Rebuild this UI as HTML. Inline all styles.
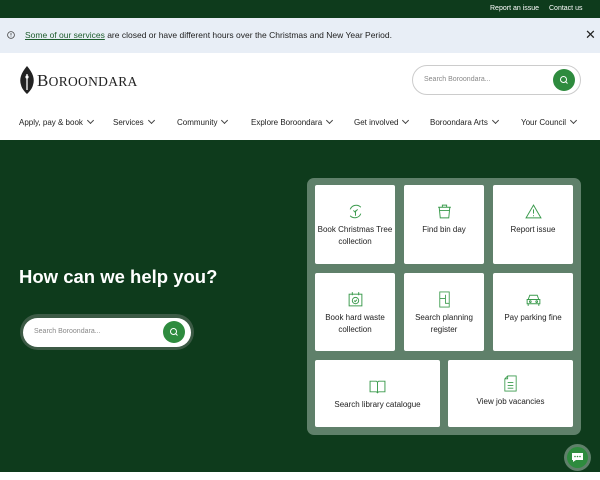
<!DOCTYPE html>
<html><head><style>
*{margin:0;padding:0;box-sizing:border-box}
body{width:600px;height:480px;overflow:hidden;font-family:"Liberation Sans",sans-serif;background:#fff;position:relative}
.a{position:absolute}
.top{left:0;top:0;width:600px;height:18px;background:#0e3b1c;color:#fff;font-size:7px}
.ban{left:0;top:18px;width:600px;height:35px;background:#e8eef6;font-size:8.5px;color:#222}
.nav{top:118px;font-size:8px;color:#222;white-space:nowrap}
.nav span.c{display:inline-block;width:5px;height:5px;border-right:1px solid #444;border-bottom:1px solid #444;transform:rotate(45deg);margin-left:5px;position:relative;top:-2px}
.hero{left:0;top:140px;width:600px;height:332px;background:#0e3b1c}
.panel{left:307px;top:178px;width:274px;height:257px;background:#5f806a;border-radius:7px}
.t{background:#fff;border-radius:2px;display:flex;flex-direction:column;align-items:center;justify-content:flex-start;text-align:center;font-size:8px;color:#222;line-height:11.5px;padding-top:18px}
.t svg{margin-bottom:4px;width:17px;height:17px}
.srch{border-radius:20px;background:#fff;font-size:7px;color:#888}
.btn{border-radius:50%;background:#2e8b3e}
</style></head><body>
<div class="a top"><span class="a" style="left:490px;top:5px">Report an issue</span><span class="a" style="left:549px;top:5px">Contact us</span></div>
<div class="a ban">
<svg class="a" style="left:7px;top:13px" width="8" height="8" viewBox="0 0 8 8"><circle cx="4" cy="4" r="3.4" fill="none" stroke="#444" stroke-width=".8"/><path d="M4 2v2.5M4 5.5v.6" stroke="#444" stroke-width=".8"/></svg>
<span class="a" style="left:25px;top:12px"><u style="color:#1d5c2c">Some of our services</u> are closed or have different hours over the Christmas and New Year Period.</span>
<span class="a" style="left:585px;top:9px;font-size:13px">✕</span></div>
<svg class="a" style="left:18px;top:65px" width="18" height="30" viewBox="0 0 18 30"><path d="M9 1C3 8 1 14 3 20c1 4 4 7 6 9 2-2 5-5 6-9 2-6 0-12-6-19z" fill="#222"/><path d="M9 9v16" stroke="#fff" stroke-width="1.3"/><circle cx="9" cy="12" r="1.6" fill="#fff"/></svg>
<span class="a" style="left:37px;top:71px;font-family:'Liberation Serif',serif;font-size:17px;color:#222;letter-spacing:.3px">B<span style="font-size:13.5px">OROONDARA</span></span>
<div class="a srch" style="left:412px;top:65px;width:169px;height:30px;border:1px solid #ccc"><span class="a" style="left:11px;top:10px">Search Boroondara...</span><div class="a btn" style="left:140px;top:3px;width:22px;height:22px"><svg class="a" style="left:6px;top:6px" width="10" height="10" viewBox="0 0 10 10"><circle cx="4.5" cy="4.5" r="3" fill="none" stroke="#fff"/><path d="M6.7 6.7L8.5 8.5" stroke="#fff"/></svg></div></div>
<div class="a nav" style="left:19px">Apply, pay &amp; book<span class="c"></span></div>
<div class="a nav" style="left:113px">Services<span class="c"></span></div>
<div class="a nav" style="left:177px">Community<span class="c"></span></div>
<div class="a nav" style="left:251px">Explore Boroondara<span class="c"></span></div>
<div class="a nav" style="left:354px">Get involved<span class="c"></span></div>
<div class="a nav" style="left:430px">Boroondara Arts<span class="c"></span></div>
<div class="a nav" style="left:521px">Your Council<span class="c"></span></div>
<div class="a hero"></div>
<div class="a" style="left:19px;top:266px;font-size:18.5px;font-weight:bold;color:#fff">How can we help you?</div>
<div class="a" style="left:20px;top:314px;width:174px;height:36px;border-radius:20px;background:#3c5a45"></div>
<div class="a srch" style="left:23px;top:318px;width:168px;height:29px"><span class="a" style="left:11px;top:10px">Search Boroondara...</span><div class="a btn" style="left:140px;top:3px;width:22px;height:22px"><svg class="a" style="left:6px;top:6px" width="10" height="10" viewBox="0 0 10 10"><circle cx="4.5" cy="4.5" r="3" fill="none" stroke="#fff"/><path d="M6.7 6.7L8.5 8.5" stroke="#fff"/></svg></div></div>
<div class="a panel"></div>
<div class="a t" style="left:315px;top:185px;width:80px;height:79px"><svg viewBox="0 0 16 16" fill="none" stroke="#3a9a4c" stroke-width=".9"><path d="M3 6a6 6 0 0 1 10-2M13 10a6 6 0 0 1-10 2"/><path d="M8 12V7M8 9l-2-2M8 8l2-2"/></svg>Book Christmas Tree collection</div>
<div class="a t" style="left:404px;top:185px;width:80px;height:79px"><svg viewBox="0 0 16 16" fill="none" stroke="#3a9a4c" stroke-width=".9"><path d="M2 4h12M6 4V2h4v2M3 4l1 10h8l1-10M3 7h10"/></svg>Find bin day</div>
<div class="a t" style="left:493px;top:185px;width:80px;height:79px"><svg viewBox="0 0 16 16" fill="none" stroke="#3a9a4c" stroke-width=".9"><path d="M8 2L1 14h14z M8 6v4M8 11.5v1"/></svg>Report issue</div>
<div class="a t" style="left:315px;top:273px;width:80px;height:78px"><svg viewBox="0 0 16 16" fill="none" stroke="#3a9a4c" stroke-width=".9"><rect x="2" y="3" width="12" height="11"/><path d="M5 1v3M11 1v3"/><circle cx="8" cy="9" r="3"/><path d="M6.7 9l1 1 1.6-1.8"/></svg>Book hard waste collection</div>
<div class="a t" style="left:404px;top:273px;width:80px;height:78px"><svg viewBox="0 0 16 18" fill="none" stroke="#3a9a4c" stroke-width=".9"><rect x="3" y="1" width="10" height="16"/><path d="M3 8h6v5h4M9 4v4"/></svg>Search planning register</div>
<div class="a t" style="left:493px;top:273px;width:80px;height:78px"><svg viewBox="0 0 16 16" fill="none" stroke="#3a9a4c" stroke-width=".9"><path d="M3 8l1.5-4h7L13 8M2 8h12v4H2zM3 12v2M13 12v2"/><circle cx="5" cy="10" r=".8"/><circle cx="11" cy="10" r=".8"/></svg>Pay parking fine</div>
<div class="a t" style="left:315px;top:360px;width:125px;height:67px"><svg viewBox="0 0 16 14" fill="none" stroke="#3a9a4c" stroke-width=".9"><path d="M1 2h6l1 1 1-1h6v10H9l-1 1-1-1H1zM8 3v10"/></svg>Search library catalogue</div>
<div class="a t" style="left:448px;top:360px;width:125px;height:67px;padding-top:15px"><svg viewBox="0 0 14 18" fill="none" stroke="#3a9a4c" stroke-width=".9"><path d="M4 1h9v16H1V4zM4 1v3H1M4 8h6M4 11h6M4 14h6"/></svg>View job vacancies</div>
<div class="a" style="left:564px;top:444px;width:27px;height:27px;border-radius:50%;background:#5f806a"></div>
<div class="a btn" style="left:567px;top:447px;width:21px;height:21px"><svg class="a" style="left:4px;top:5px" width="13" height="11" viewBox="0 0 13 11"><path d="M1 1h11v7H5l-3 2V8H1z" fill="#fff"/><circle cx="4" cy="4.5" r=".8" fill="#2e8b3e"/><circle cx="6.5" cy="4.5" r=".8" fill="#2e8b3e"/><circle cx="9" cy="4.5" r=".8" fill="#2e8b3e"/></svg></div>
</body></html>
